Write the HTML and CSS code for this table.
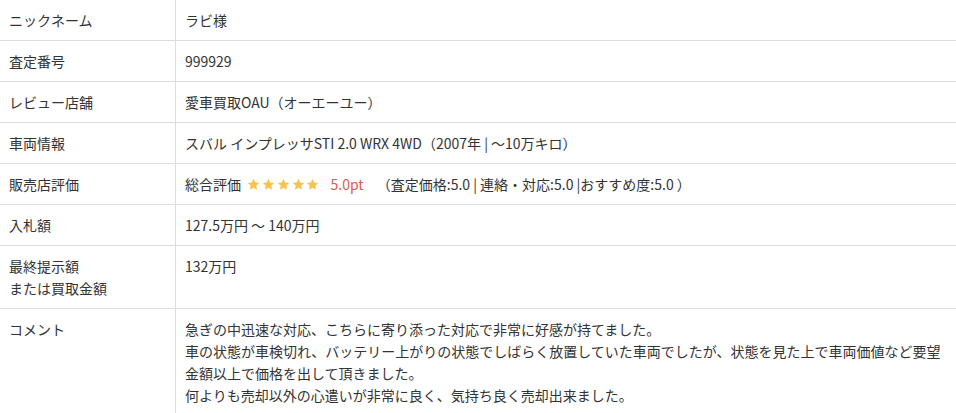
FILE: index.html
```html
<!DOCTYPE html>
<html lang="ja">
<head>
<meta charset="utf-8">
<title>レビュー詳細</title>
<link rel="stylesheet" href="styles.css">
</head>
<body>
<table class="review">
  <tr><th>ニックネーム</th><td>ラビ様</td></tr>
  <tr><th>査定番号</th><td>999929</td></tr>
  <tr><th>レビュー店舗</th><td>愛車買取OAU（オーエーユー）</td></tr>
  <tr><th>車両情報</th><td>スバル インプレッサSTI 2.0 WRX 4WD（2007年 | ～10万キロ）</td></tr>
  <tr><th>販売店評価</th><td>
    <span class="label">総合評価</span>
    <span class="stars">
      <svg viewBox="0 0 24 24" class="star"><path d="M12 1.5l3.2 6.9 7.3.8-5.5 5 1.6 7.4L12 17.8l-6.6 3.8 1.6-7.4-5.5-5 7.3-.8z"/></svg>
      <svg viewBox="0 0 24 24" class="star"><path d="M12 1.5l3.2 6.9 7.3.8-5.5 5 1.6 7.4L12 17.8l-6.6 3.8 1.6-7.4-5.5-5 7.3-.8z"/></svg>
      <svg viewBox="0 0 24 24" class="star"><path d="M12 1.5l3.2 6.9 7.3.8-5.5 5 1.6 7.4L12 17.8l-6.6 3.8 1.6-7.4-5.5-5 7.3-.8z"/></svg>
      <svg viewBox="0 0 24 24" class="star"><path d="M12 1.5l3.2 6.9 7.3.8-5.5 5 1.6 7.4L12 17.8l-6.6 3.8 1.6-7.4-5.5-5 7.3-.8z"/></svg>
      <svg viewBox="0 0 24 24" class="star"><path d="M12 1.5l3.2 6.9 7.3.8-5.5 5 1.6 7.4L12 17.8l-6.6 3.8 1.6-7.4-5.5-5 7.3-.8z"/></svg>
    </span>
    <span class="point">5.0pt</span>
    <span class="detail">（査定価格:5.0 | 連絡・対応:5.0 |おすすめ度:5.0 ）</span>
  </td></tr>
  <tr><th>入札額</th><td>127.5万円 ～ 140万円</td></tr>
  <tr><th>最終提示額<br>または買取金額</th><td>132万円</td></tr>
  <tr><th>コメント</th><td>急ぎの中迅速な対応、こちらに寄り添った対応で非常に好感が持てました。<br>車の状態が車検切れ、バッテリー上がりの状態でしばらく放置していた車両でしたが、状態を見た上で車両価値など要望金額以上で価格を出して頂きました。<br>何よりも売却以外の心遣いが非常に良く、気持ち良く売却出来ました。</td></tr>
</table>
</body>
</html>
```
FILE: styles.css
```css
html, body {
  margin: 0;
  padding: 0;
  background: #fff;
}
body {
  font-family: "Noto Sans CJK JP", "Noto Sans", sans-serif;
  font-size: 14px;
  line-height: 22px;
  color: #333;
}
.review {
  width: 956px;
  border-collapse: collapse;
  table-layout: fixed;
  margin-top: -1px;
}
.review th,
.review td {
  border-top: 1px solid #ddd;
  border-bottom: 1px solid #ddd;
  padding: 9px 10px 9px 9px;
  text-align: left;
  vertical-align: top;
  font-weight: normal;
}
.review th {
  width: 156px;
  padding-left: 9px;
  border-right: 1px solid #ddd;
}
.label {
  margin-right: 3px;
}
.stars {
  display: inline-flex;
  gap: 1.8px;
  vertical-align: -1px;
  margin-right: 8px;
}
.star {
  width: 13px;
  height: 13px;
  fill: #f7c348;
}
.point {
  color: #e5574b;
  margin-right: 10px;
}
```
